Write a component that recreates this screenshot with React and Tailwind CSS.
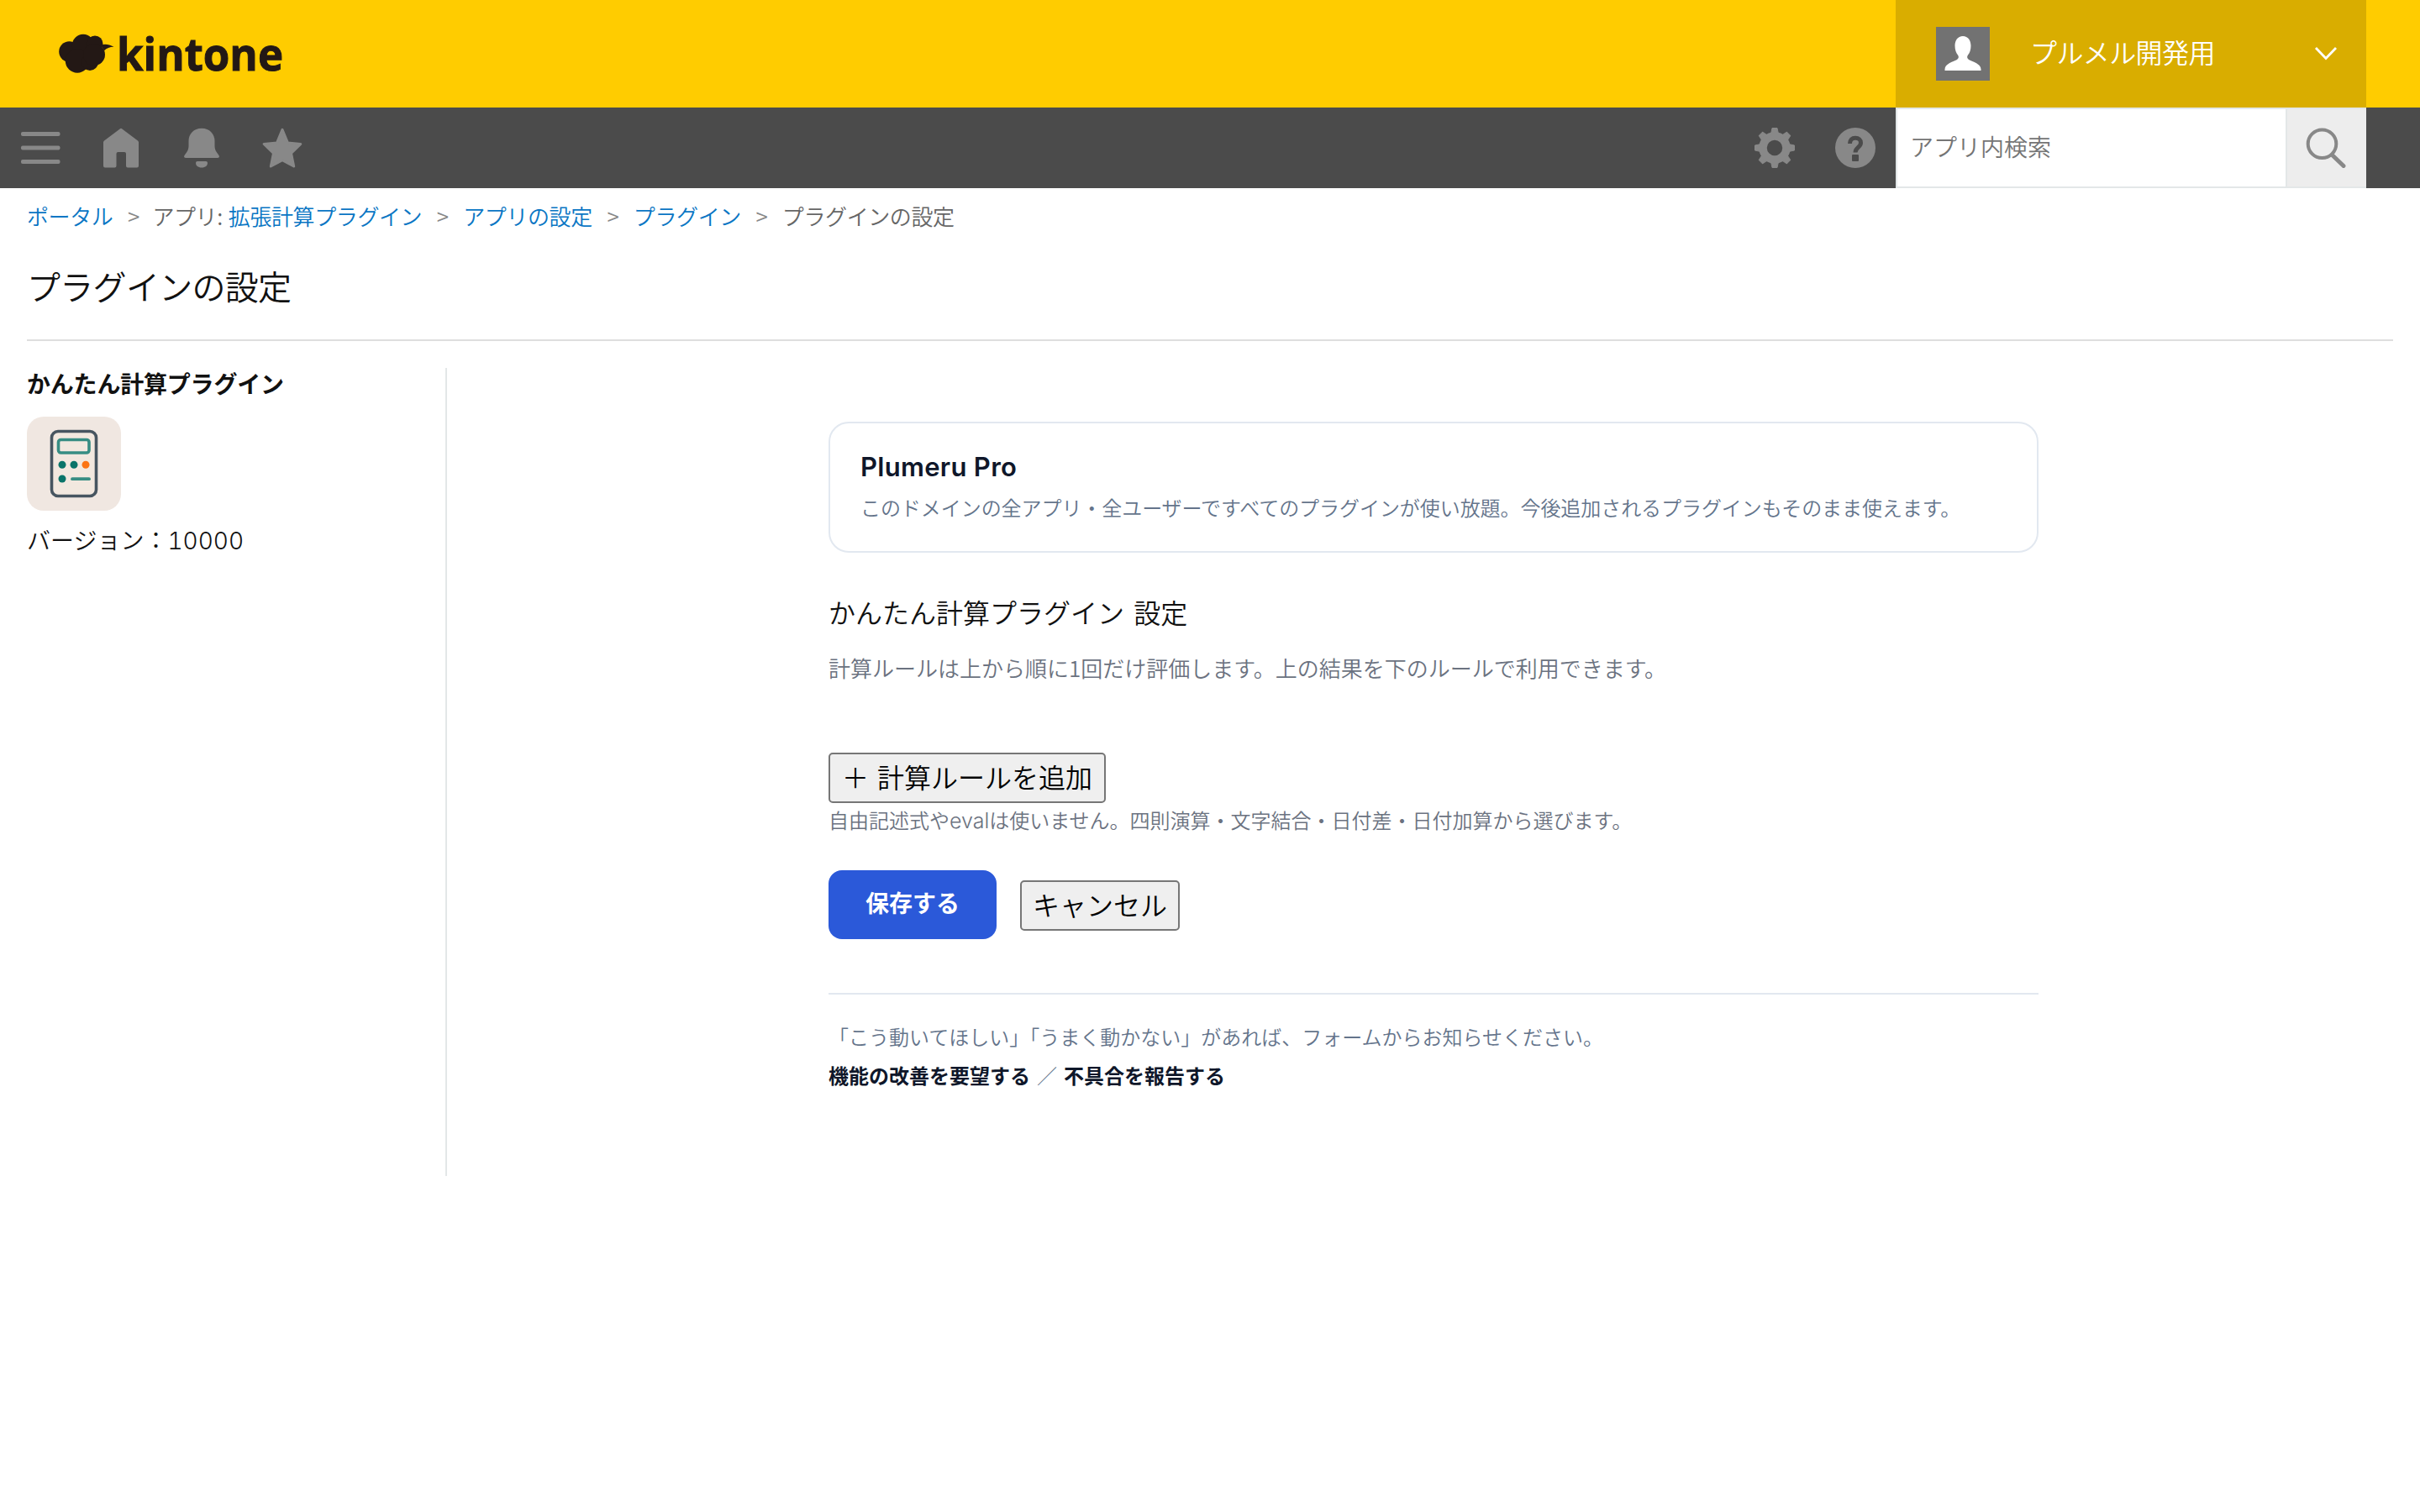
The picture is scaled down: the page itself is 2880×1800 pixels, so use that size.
import React from 'react';

const Cloud = () => (
    <svg className="w-[68px] h-[48px] shrink-0" viewBox="0 0 68 48" fill="#231815">
        <circle cx="12.5" cy="21.500" r="12.3" />
        <circle cx="29" cy="14" r="13.2" />
        <circle cx="43" cy="12" r="9.5" />
        <circle cx="22" cy="32.500" r="14.2" />
        <circle cx="37" cy="34" r="10" />
        <circle cx="42" cy="25" r="13" />
        <path d="M50 13.500c5-1.500 10-.8 15.500 2.200-5 .2-8.500 1.400-11.500 4.600z" />
    </svg>
);

const MenuIcon = () => (
    <svg className="w-12 h-12" viewBox="0 0 48 48" fill="#888">
        <rect x="1" y="5" width="46.500" height="5" rx="2" />
        <rect x="1" y="21.500" width="46.500" height="5" rx="2" />
        <rect x="1" y="38" width="46.500" height="5" rx="2" />
    </svg>
);

const HomeIcon = () => (
    <svg className="w-12 h-12" viewBox="0 0 48 48" fill="#888">
        <path d="M23 1.200q1-.9 2 0L44 15.500q1 .8 1 2V45.500q0 2-2 2H32q-2 0-2-2V31q0-2-2-2h-7.500q-2 0-2 2v14.500q0 2-2 2H5q-2 0-2-2V17.500q0-1.200 1-2z" />
    </svg>
);

const BellIcon = () => (
    <svg className="w-12 h-12" viewBox="0 0 48 48" fill="#888">
        <path d="M24 .7C14.500.7 8.500 7.500 8.500 16v5.500c0 3.500-.8 5.500-2.200 7.500l-2.800 4c-1 1.600-.2 3 1.500 3h38c1.700 0 2.500-1.400 1.500-3l-2.800-4c-1.400-2-2.200-4-2.200-7.500V16C39.500 7.500 33.500.7 24 .7z" />
        <path d="M19 40h10q2 0 2 2c0 3-2.500 5.500-7 5.500s-7-2.500-7-5.500q0-2 2-2z" />
    </svg>
);

const StarIcon = () => (
    <svg className="w-12 h-12" viewBox="0 0 48 48" fill="#888" stroke="#888" strokeWidth="3" strokeLinejoin="round">
        <path d="M24 2.300l6.500 15.700 15.300 1.400-11.300 11L37.700 46 24 38.700 10.300 46l3.200-15.600-11.300-11L17.500 18z" />
    </svg>
);

const TEETH = [0, 45, 90, 135, 180, 225, 270, 315];

const GearIcon = () => (
    <svg className="w-12 h-12" viewBox="0 0 48 48">
        {TEETH.map((deg) => (
            <path key={deg} d="M21 0.500h6l1.500 7h-9z" fill="#888" stroke="#888" strokeLinejoin="round" transform={`rotate(${deg} 24 24)`} />
        ))}
        <circle cx="24" cy="24" r="14" fill="none" stroke="#888" strokeWidth="9.500" />
    </svg>
);

const HelpIcon = () => (
    <svg className="w-12 h-12" viewBox="0 0 48 48">
        <circle cx="24" cy="24" r="24" fill="#888" />
        <path d="M17.500 19c0-4.500 2.500-6.800 6.500-6.800s6.500 2.300 6.500 5.800c0 5.500-6.500 5.500-6.500 11.500" fill="none" stroke="#4b4b4b" strokeWidth="5" />
        <rect x="20" y="32" width="8" height="8" rx="1" fill="#4b4b4b" />
    </svg>
);

const SearchIcon = () => (
    <svg className="w-12 h-12" viewBox="0 0 48 48" fill="none" stroke="#888" strokeLinecap="round">
        <circle cx="19.500" cy="19.300" r="16.800" strokeWidth="4" />
        <path d="M32 33l13 12.500" strokeWidth="5" />
    </svg>
);

const Avatar = () => (
    <svg className="w-16 h-16 shrink-0" viewBox="0 0 64 64">
        <rect width="64" height="64" fill="#727272" />
        <path d="M32 11c6 0 9.500 5 9.500 11.500 0 5-1.500 8.500-3.500 11-1.500 2-1 4 1 5.500 5 2.500 14.500 5 14.500 11.500V52h-43v-1.500C10.500 44 20 41.500 25 39c2-1.500 2.500-3.500 1-5.500-2-2.500-3.500-6-3.500-11C22.500 16 26 11 32 11z" fill="#fff" />
    </svg>
);

const CalculatorIcon = () => (
    <svg className="w-28 h-28" viewBox="0 0 112 112">
        <rect width="112" height="112" rx="20" fill="#f0e7e1" />
        <rect x="29.500" y="17.500" width="53" height="77" rx="7.500" fill="#f2e8df" stroke="#475560" strokeWidth="3.600" />
        <rect x="37.500" y="27.500" width="36.500" height="15.500" rx="3" fill="none" stroke="#378d83" strokeWidth="3.600" />
        <circle cx="42" cy="57.300" r="4.500" fill="#0a7469" />
        <circle cx="56" cy="57.300" r="4.500" fill="#0a7469" />
        <circle cx="70" cy="57.300" r="4.500" fill="#fb7414" />
        <circle cx="42" cy="74" r="4.500" fill="#0a7469" />
        <path d="M54 74.200h20" stroke="#378d83" strokeWidth="3.800" strokeLinecap="round" />
    </svg>
);

const Separator = () => <span className="w-[49px] text-center text-[#888]">&gt;</span>;

const Header = () => (
    <header className="h-32 bg-[#ffcc00] flex justify-between pl-[70px] pr-16">
        <div className="flex items-center">
            <Cloud />
            <svg className="w-[220px] h-[96px]" viewBox="0 0 220 96">
                <text x="1" y="67.500" textLength="198" lengthAdjust="spacingAndGlyphs" fontSize="53" fontWeight="700" fill="#231815" stroke="#231815" strokeWidth="1" className="font-['Open_Sans',sans-serif]">kintone</text>
            </svg>
        </div>
        <div className="w-[560px] bg-[#d9ad00] flex items-center pl-12 pr-[34px] text-white text-[32px]">
            <Avatar />
            <span className="ml-12 grow leading-none -mt-1.5 tracking-[-0.6px]">プルメル開発用</span>
            <svg className="w-[28px] h-[18px]" viewBox="0 0 28 18" fill="none" stroke="#fff" strokeWidth="2.800">
                <path d="M2 2l12 12.500L26 2" />
            </svg>
        </div>
    </header>
);

const Toolbar = () => (
    <nav className="h-24 bg-[#4b4b4b] flex items-center justify-between pl-6 pr-16">
        <div className="flex gap-12">
            <MenuIcon />
            <HomeIcon />
            <BellIcon />
            <StarIcon />
        </div>
        <div className="flex items-center h-full">
            <GearIcon />
            <div className="ml-12 mr-6"><HelpIcon /></div>
            <div className="w-[560px] h-full flex bg-white border-y-2 border-l-2 border-[#e3e7e8] text-[28px] text-[#757575]">
                <span className="grow flex items-center pl-[15px] pb-1">アプリ内検索</span>
                <span className="w-24 bg-[#ededed] border-l-2 border-[#e3e7e8] flex items-center justify-center pr-[3px]">
                    <SearchIcon />
                </span>
            </div>
        </div>
    </nav>
);

const Breadcrumb = () => (
    <div className="flex h-[68px] items-center px-8 pb-1 text-[26px] tracking-[-0.4px] text-[#666]">
        <a className="text-[#0a76c4]">ポータル</a>
        <Separator />
        <span className="-ml-[2px] mr-[7px]">アプリ:</span>
        <a className="text-[#0a76c4]">拡張計算プラグイン</a>
        <Separator />
        <a className="text-[#0a76c4]">アプリの設定</a>
        <Separator />
        <a className="text-[#0a76c4]">プラグイン</a>
        <Separator />
        <span>プラグインの設定</span>
    </div>
);

const Sidebar = () => (
    <aside className="w-[500px] h-[962px] border-r-2 border-[#e3e7e8] text-[28px] leading-[36px] text-[#111]">
        <h2 className="font-bold tracking-[-0.2px]">かんたん計算プラグイン</h2>
        <div className="mt-[22px]"><CalculatorIcon /></div>
        <p className="mt-4">バージョン：<span className="font-['Inter',sans-serif] tabular-nums">10000</span></p>
    </aside>
);

const Settings = () => (
    <main className="w-[1440px] mt-16 ml-[454px]">
        <section className="h-[156px] rounded-3xl border-2 border-[#e2e8f0] px-9 pt-8">
            <h3 className="font-['Inter',sans-serif] font-semibold text-[31px] leading-[40px] tracking-[0.3px] text-[#0f172a]">Plumeru Pro</h3>
            <p className="mt-2 text-[24px] leading-[40px] tracking-[-0.06px] text-[#64748b]">このドメインの全アプリ・全ユーザーですべてのプラグインが使い放題。今後追加されるプラグインもそのまま使えます。</p>
        </section>
        <h1 className="mt-[50px] text-[32px] leading-[40px] [word-spacing:4px] text-[#111]">かんたん計算プラグイン 設定</h1>
        <p className="mt-[27px] text-[26px] leading-[40px] text-[#6b7280]">計算ルールは上から順に1回だけ評価します。上の結果を下のルールで利用できます。</p>
        <button className="mt-[81px] block w-[330px] h-[60px] rounded-[5px] border-2 border-[#767676] bg-[#efefef] text-[32px] leading-[50px] pb-1 whitespace-nowrap [word-spacing:3px] text-black">＋ 計算ルールを追加</button>
        <p className="h-10 text-[24px] leading-[40px] text-[#6b7280]">自由記述式や<span className="font-['Inter',sans-serif] text-[25px]">eval</span>は使いません。四則演算・文字結合・日付差・日付加算から選びます。</p>
        <div className="mt-10 flex items-center gap-7">
            <button className="w-[200px] h-[82px] rounded-2xl bg-[#2b59d9] text-[28px] leading-[74px] pb-1.5 font-bold text-white">保存する</button>
            <button className="w-[190px] h-[60px] mt-[2px] rounded-[5px] border-2 border-[#767676] bg-[#efefef] text-[32px] leading-[50px] pb-1 text-black">キャンセル</button>
        </div>
        <footer className="mt-16 border-t-2 border-[#e2e8f0] pt-[27px] text-[24px] leading-[46px] text-[#64748b]">
            <p>「こう動いてほしい」「うまく動かない」があれば、フォームからお知らせください。</p>
            <p>
                <a className="font-bold text-[#0f172a]">機能の改善を要望する</a>
                <span className="mx-2">／</span>
                <a className="font-bold text-[#0f172a]">不具合を報告する</a>
            </p>
        </footer>
    </main>
);

const App = () => {
    return (
        <div lang="ja" className="w-[2880px] h-[1800px] overflow-hidden bg-white font-[350] font-['Noto_Sans_CJK_JP',sans-serif]">
            <Header />
            <Toolbar />
            <Breadcrumb />
            <div className="mx-8 h-[114px] border-b-2 border-[#dedede] pt-[24px] text-[40px] leading-[48px] tracking-[-0.7px] text-[#111]">
                プラグインの設定
            </div>
            <div className="mt-8 pl-8 flex items-start">
                <Sidebar />
                <Settings />
            </div>
        </div>
    );
};

export default App;
